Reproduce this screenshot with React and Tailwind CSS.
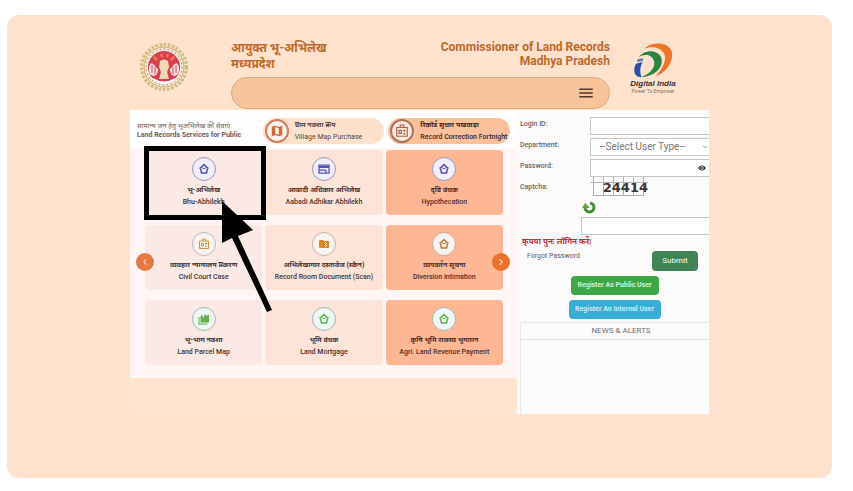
import React, { useState } from "react";
import {
  MdMap,
  MdFolderZip,
  MdMenu,
  MdChevronLeft,
  MdChevronRight,
  MdVisibility,
} from "react-icons/md";

const HouseIcon = () => (
  <svg viewBox="0 0 24 24" className="h-3 w-3" fill="none" stroke="currentColor" strokeWidth="3">
    <path d="M3 11 L8 7 L12 3 L16 7 L21 11" />
    <path d="M5 11 L7 20 H17 L19 11" />
    <path d="M8 9 L12 12 L16 9" strokeWidth="2" />
  </svg>
);

const WindowIcon = () => (
  <svg viewBox="0 0 24 24" className="h-3 w-3" fill="none" stroke="currentColor" strokeWidth="2.5">
    <path d="M2 4 H22 V20 H2 Z" />
    <path d="M2 8 H22" strokeWidth="4" />
    <path d="M2 14 H16 M16 14 V20" />
  </svg>
);

const BadgeIcon = ({ className = "h-3 w-3" }) => (
  <svg viewBox="0 0 24 24" className={className} fill="none" stroke="currentColor" strokeWidth="2">
    <path d="M3 6 H21 V21 H3 Z" />
    <path d="M9 6 V2 H15 V6" />
    <path d="M7 11 H11 V16 H7 Z M14 11 H18 M14 17 H18 M16 11 V14" />
  </svg>
);

const PlotIcon = () => (
  <svg viewBox="0 0 24 24" className="h-3 w-3" fill="currentColor">
    <path d="M5 6 L9 3 V8 L12 9 V5 L16 2 V6 L22 3 V19 H5 Z" />
    <path d="M1 8 H3 V21 H19 V23 H1 Z" />
  </svg>
);

const Emblem = () => (
  <svg viewBox="0 0 48 48" className="h-12 w-12">
    <circle cx="24" cy="24" r="22.5" fill="#f3e6c4" stroke="#cdbb80" strokeWidth="3" strokeDasharray="2.6 1.6" />
    <circle cx="24" cy="24" r="20" fill="#f7ecd9" stroke="#c8ad68" strokeWidth="1" />
    <circle cx="24" cy="24" r="16" fill="#d9404c" />
    <circle cx="24" cy="24" r="18" fill="none" stroke="#c2606a" strokeWidth="1" strokeDasharray="1.5 2.5" />
    <path d="M20 18 Q24 15 28 18 L29 24 L27 29 L29 36 H19 L21 29 L19 24 Z" fill="#f0d9b5" />
    <path d="M9 24 Q11 17 15 23 L18 26 Q18 33 13 33 Q8 31 9 24 Z" fill="#f6dfe0" />
    <path d="M39 24 Q37 17 33 23 L30 26 Q30 33 35 33 Q40 31 39 24 Z" fill="#f6dfe0" />
    <path d="M12 22 V30 M15 24 V31 M36 22 V30 M33 24 V31" stroke="#cf4a56" strokeWidth="1" />
    <path d="M14 14 L17 17 M21 11 L22 14 M28 11 L27 14 M34 14 L31 17" stroke="#ee8a55" strokeWidth="2" />
    <path d="M13 36 Q24 43 35 36" fill="none" stroke="#fff" strokeWidth="2" />
  </svg>
);

const DigitalIndia = () => (
  <div className="flex w-[50px] flex-col items-center">
    <svg viewBox="0 0 42 38" className="h-9 w-[42px]">
      <path d="M12 6 C18 -1 35 -2 40 7 C45 18 34 32 24 35 C31 27 37 17 32 10 C28 4 19 3 12 6 Z" fill="#ee7429" />
      <path d="M6 15 C11 7 26 6 30 16 C32 27 22 35 9 36 C18 32 24 26 22 19 C20 12 12 11 6 15 Z" fill="#2b8540" />
      <path d="M3 22 L10 20 C7 26 7 31 9 36 C2 37 -1 30 3 22 Z" fill="#2c50a3" />
      <path d="M5 17 L11 16 L10 19 L4 20 Z" fill="#5d7cb5" />
    </svg>
    <span className="whitespace-nowrap font-['Liberation_Sans'] text-[8px] font-bold italic leading-[9px] text-[#3d302c]">
      Digital India
    </span>
    <span className="whitespace-nowrap text-[5px] leading-[6px] text-[#84736b]">Power To Empower</span>
  </div>
);

const Pointer = () => (
  <svg viewBox="0 0 52 112" className="absolute left-[76px] top-[50px] h-28 w-[52px]">
    <path d="M1 1 L32 30 L17 36 L51 110 L46 112 L11 38 L1 43 Z" fill="#000" />
  </svg>
);

const columnColors = ["bg-[#fbe9e5]", "bg-[#fee3d8]", "bg-[#feb693]"];

const services = [
  { hi: "भू-अभिलेख", en: "Bhu-Abhilekh", icon: <HouseIcon />, color: "text-[#5450b4] border-[#9c93c4] bg-[#f1eefc]", marked: true },
  { hi: "आबादी अधिकार अभिलेख", en: "Aabadi Adhikar Abhilekh", icon: <WindowIcon />, color: "text-[#5450b4] border-[#9c93c4] bg-[#f1eefc]" },
  { hi: "दृष्टि बंधक", en: "Hypothecation", icon: <HouseIcon />, color: "text-[#5450b4] border-[#9c93c4] bg-[#f1eefc]" },
  { hi: "व्यवहार न्यायालय प्रकरण", en: "Civil Court Case", icon: <BadgeIcon />, color: "text-[#c69a45] border-[#bdb5b3] bg-[#f8f3f1]" },
  { hi: "अभिलेखागार दस्तावेज (स्कैन)", en: "Record Room Document (Scan)", icon: <MdFolderZip className="h-3 w-3" />, color: "text-[#d68a24] border-[#bdb5b3] bg-[#f8f3f1]" },
  { hi: "व्यपवर्तन सूचना", en: "Diversion Intimation", icon: <HouseIcon />, color: "text-[#bd7c3d] border-[#c3ac9f] bg-[#f8f3f1]" },
  { hi: "भू-भाग नक्शा", en: "Land Parcel Map", icon: <PlotIcon />, color: "text-[#63b04c] border-[#a3b9ae] bg-[#eef7f5]" },
  { hi: "भूमि बंधक", en: "Land Mortgage", icon: <HouseIcon />, color: "text-[#63b04c] border-[#a3b9ae] bg-[#eef7f5]" },
  { hi: "कृषि भूमि राजस्व भुगतान", en: "Agri. Land Revenue Payment", icon: <HouseIcon />, color: "text-[#63b04c] border-[#a3b9ae] bg-[#eef7f5]" },
];

const ServiceCard = ({ service, bg }) => (
  <a
    href="#"
    className={`relative flex h-[65px] flex-col items-center whitespace-nowrap rounded-sm pt-[7px] text-[7px] font-medium leading-3 text-[#4b302b] ${bg} ${service.marked ? "z-10" : ""}`}
  >
    <span className={`mb-[3px] flex h-6 w-6 items-center justify-center rounded-full border ${service.color}`}>
      {service.icon}
    </span>
    <span className="font-bold">{service.hi}</span>
    <span>{service.en}</span>
    {service.marked && (
      <>
        <span className="absolute -bottom-[5px] -left-px -right-1 -top-1 border-[5px] border-black" />
        <Pointer />
      </>
    )}
  </a>
);

const Services = () => (
  <section className="relative bg-[#fff5f5] pb-[13px]">
    <div className="grid grid-cols-3 gap-1 bg-[#fffdfd] px-[7px] pb-1 pt-2">
      <h2 className="self-center whitespace-nowrap text-[7px] leading-[9px] text-[#6c6262]">
        <span className="block">सामान्य जन हेतु भूअभिलेख की सेवाएं</span>
        <span className="block font-bold">Land Records Services for Public</span>
      </h2>
      <a href="#" className="flex h-[26px] items-center gap-[6px] whitespace-nowrap rounded-full bg-[#fde1cd] pl-[2px] text-[7px] leading-3 text-[#5b4239]">
        <span className="flex h-6 w-6 shrink-0 items-center justify-center rounded-full border-2 border-[#cf7f5e] bg-[#fdf3ee] text-[#d06a38]">
          <MdMap className="h-[14px] w-[14px]" />
        </span>
        <span className="flex flex-col">
          <span className="font-bold">ग्राम नक्शा क्रय</span>
          <span>Village Map Purchase</span>
        </span>
      </a>
      <a href="#" className="flex h-[26px] items-center gap-[6px] whitespace-nowrap rounded-full bg-[#fcc09b] pl-[2px] text-[7px] font-medium leading-3 text-[#3d221a]">
        <span className="flex h-6 w-6 shrink-0 items-center justify-center rounded-full border-2 border-[#b0705a] bg-[#fbe9e0] text-[#b06048]">
          <BadgeIcon className="h-[14px] w-[14px]" />
        </span>
        <span className="flex flex-col">
          <span className="font-bold">रिकॉर्ड सुधार पखवाड़ा</span>
          <span>Record Correction Fortnight</span>
        </span>
      </a>
    </div>
    <div className="grid grid-cols-3 gap-x-[3px] gap-y-[10px] pl-[15px] pr-[14px] pt-[2px]">
      {services.map((s, i) => (
        <ServiceCard key={s.en} service={s} bg={columnColors[i % 3]} />
      ))}
    </div>
    <button type="button" aria-label="Previous" className="absolute left-[6px] top-[143px] flex h-[18px] w-[18px] items-center justify-center rounded-full bg-[#e67a42] text-[#fbd3b9]">
      <MdChevronLeft className="h-3 w-3" />
    </button>
    <button type="button" aria-label="Next" className="absolute right-[7px] top-[143px] flex h-[18px] w-[18px] items-center justify-center rounded-full bg-[#e8732f] text-[#fde0cc]">
      <MdChevronRight className="h-3 w-3" />
    </button>
  </section>
);

const LoginPanel = () => {
  const [formData, setFormData] = useState({ loginId: "", userType: "", password: "", captcha: "" });

  const handleChange = (e) => {
    setFormData({ ...formData, [e.target.name]: e.target.value });
  };

  return (
    <aside className="overflow-hidden bg-[#fcfbfb] text-[7px] text-[#6b6363]">
      <form onSubmit={(e) => e.preventDefault()} className="pl-[3px] pt-[7px]">
        <div className="flex flex-col gap-[3px]">
          <div className="flex items-start">
            <label htmlFor="loginId" className="w-[70px] shrink-0 font-medium leading-[14px]">Login ID:</label>
            <input id="loginId" name="loginId" value={formData.loginId} onChange={handleChange} className="h-[18px] min-w-0 flex-1 border border-r-0 border-[#c9c5c5] bg-white px-2" />
          </div>
          <div className="flex items-start">
            <label htmlFor="userType" className="w-[70px] shrink-0 font-medium leading-[14px]">Department:</label>
            <div className="relative min-w-0 flex-1">
              <select id="userType" name="userType" value={formData.userType} onChange={handleChange} className="block h-[18px] w-full appearance-none border border-r-0 border-[#c9c5c5] bg-white pl-[9px] text-[10px] leading-4 text-[#7a7575]">
                <option value="">--Select User Type--</option>
              </select>
              <MdChevronRight className="pointer-events-none absolute right-0 top-[5px] h-2 w-2 rotate-90 text-[#8f8a8a]" />
            </div>
          </div>
          <div className="flex items-start">
            <label htmlFor="password" className="w-[70px] shrink-0 font-medium leading-[14px]">Password:</label>
            <div className="relative min-w-0 flex-1">
              <input id="password" name="password" type="password" value={formData.password} onChange={handleChange} className="block h-[18px] w-full border border-r-0 border-[#c9c5c5] bg-white px-2" />
              <MdVisibility className="absolute right-[3px] top-[5px] h-2 w-2 text-[#2c2727]" />
            </div>
          </div>
        </div>
        <div className="flex items-center">
          <label htmlFor="captcha" className="w-[70px] shrink-0 font-medium">Captcha:</label>
          <div className="relative flex h-[21px] w-[58px] items-center justify-end">
            <svg viewBox="0 0 58 21" className="absolute inset-0 h-full w-full" stroke="#b3adad" fill="none">
              <path d="M0 5.5 H58 M3 18.5 H54 M3.5 0 V19 M13.5 0 V19 M23.5 0 V19 M33.5 0 V19 M43.5 0 V19 M53.5 0 V19" />
            </svg>
            <span className="relative font-['DejaVu_Sans'] text-[13px] font-bold leading-[21px] text-[#3a3535]">24414</span>
          </div>
        </div>
        <button type="button" aria-label="Refresh captcha" className="ml-[62px] mt-[2px] block h-[14px] w-[14px]">
          <svg viewBox="0 0 14 14" className="h-full w-full">
            <path d="M3 8 A4.5 4.5 0 1 0 8 3" fill="none" stroke="#43902f" strokeWidth="3" />
            <path d="M0 8 L3 3 L8 8 Z" fill="#5aa53c" />
          </svg>
        </button>
        <input id="captcha" name="captcha" value={formData.captcha} onChange={handleChange} className="ml-[61px] mt-[3px] block h-[18px] w-full border border-[#c9c5c5] bg-white px-2" />
        <p className="ml-[2px] mt-px text-[8px] font-bold leading-3 text-[#bd2f40]">कृपया पुनः लॉगिन करें|</p>
        <div className="flex items-start justify-between pl-[7px] pr-[11px]">
          <a href="#" className="mt-[3px] text-[7px] leading-[10px] text-[#5e5757]">Forgot Password</a>
          <button type="submit" className="mt-[3px] h-5 w-[46px] rounded-sm bg-[#418256] text-[8px] font-medium text-[#d9ece0]">Submit</button>
        </div>
        <div className="mt-[5px] flex flex-col items-center gap-[5px]">
          <button type="button" className="h-[19px] w-[88px] whitespace-nowrap rounded-sm bg-[#3ea748] text-[7px] font-bold text-[#d3f0d2]">Register As Public User</button>
          <button type="button" className="h-[19px] w-[92px] whitespace-nowrap rounded-sm bg-[#36aed5] text-[7px] font-bold text-[#c5ecf6]">Register An Internal User</button>
        </div>
      </form>
      <section className="ml-[3px] mt-[3px] border-l border-t border-[#eae7e7]">
        <h2 className="border-b border-[#e2dfdf] pl-3 text-center text-[8px] leading-4 text-[#746e6e]">NEWS &amp; ALERTS</h2>
        <div className="h-[74px]" />
      </section>
    </aside>
  );
};

const App = () => {
  return (
    <div className="bg-white pb-[13px] pl-[7px] pr-[21px] pt-[15px] font-[Roboto,'Noto_Sans',sans-serif]">
      <div className="rounded-xl bg-[#ffe2cd] px-[123px] pb-16">
        <header className="flex items-start pb-px">
          <div className="w-[101px] shrink-0 pl-[10px] pt-7">
            <Emblem />
          </div>
          <div className="min-w-0 flex-1 pt-[25px]">
            <div className="flex h-8 justify-between font-bold text-[#bd6a2c]">
              <h1 className="text-[12px] leading-4">
                आयुक्त भू-अभिलेख
                <br />
                मध्यप्रदेश
              </h1>
              <p className="text-right text-[12px] leading-[14px]">
                Commissioner of Land Records
                <br />
                Madhya Pradesh
              </p>
            </div>
            <nav className="mt-[5px] flex h-8 items-center justify-end rounded-full border border-[#dcaa80] bg-[#fac49b] pr-[14px]">
              <button type="button" aria-label="Menu" className="text-[#51362c]">
                <MdMenu className="h-[18px] w-[18px]" />
              </button>
            </nav>
          </div>
          <div className="w-[99px] shrink-0 pl-[18px] pt-7">
            <DigitalIndia />
          </div>
        </header>
        <main className="grid grid-cols-[387fr_192fr] items-start bg-[#ffe5d1]">
          <Services />
          <LoginPanel />
        </main>
      </div>
    </div>
  );
};

export default App;
